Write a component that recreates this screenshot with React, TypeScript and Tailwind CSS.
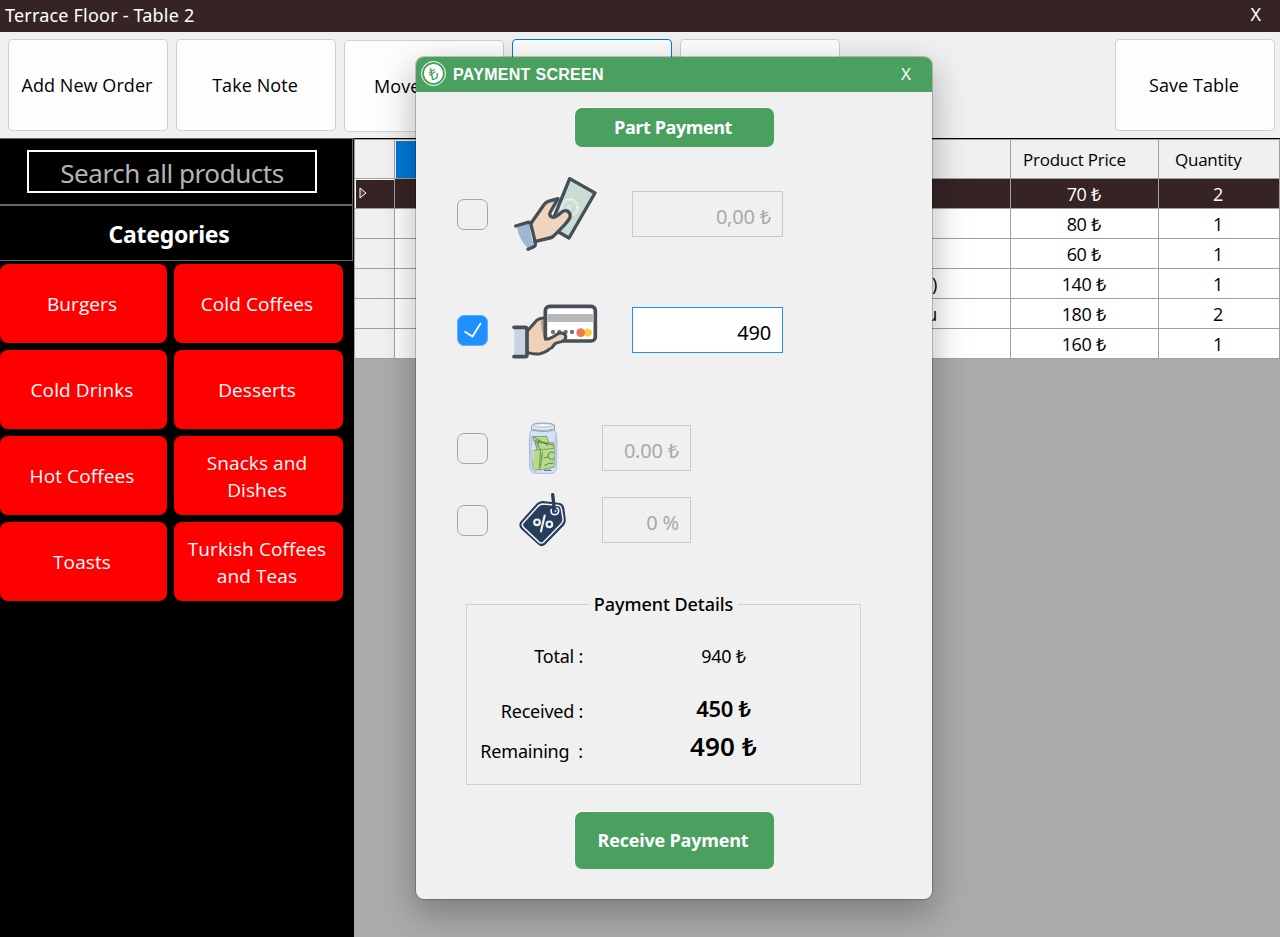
import { useState } from "react";
import type { ReactNode } from "react";

const categories = [
  "Burgers",
  "Cold Coffees",
  "Cold Drinks",
  "Desserts",
  "Hot Coffees",
  "Snacks and Dishes",
  "Toasts",
  "Turkish Coffees and Teas",
];

const orders = [
  { name: "", price: "70 ₺", quantity: 2 },
  { name: "", price: "80 ₺", quantity: 1 },
  { name: "", price: "60 ₺", quantity: 1 },
  { name: ")", price: "140 ₺", quantity: 1 },
  { name: "u", price: "180 ₺", quantity: 2 },
  { name: "", price: "160 ₺", quantity: 1 },
];

function ToolButton({ children, className = "border-[#d0d0d0]" }: { children?: ReactNode; className?: string }) {
  return (
    <button
      className={`h-[92px] w-40 shrink-0 rounded-[4px] border bg-[#fdfdfd] pt-px pr-0.5 font-['Open_Sans',sans-serif] text-[18px] tracking-[0.07px] whitespace-nowrap text-black ${className}`}
    >
      {children}
    </button>
  );
}

function CashIcon() {
  return (
    <svg viewBox="0 0 330 297" className="h-[99px] w-[110px] shrink-0" fill="none" strokeLinejoin="round" strokeLinecap="round">
      <path d="M209 41 285 84 207 219 150 186Z" fill="#c9ddd3" stroke="#464e57" strokeWidth="10" />
      <circle cx="209" cy="128" r="26" stroke="#fff" strokeWidth="2.5" />
      <circle cx="209" cy="128" r="21" stroke="#fff" strokeWidth="1.5" />
      <path d="m201 120 12 5m-13 1 12 5" stroke="#fff" strokeWidth="2" />
      <path
        d="M94 173 133 118Q137 112 145 109L174 101 149 141Q148 154 159 157 168 157 182 144 191 134 202 138 213 145 210 158 205 167 195 178L163 211Q158 217 149 219L104 230Z"
        fill="#efd5be"
      />
      <path d="M94 173 133 118Q137 112 145 109L174 101M174 101 151 141Q145 154 159 157 168 157 182 144 191 134 202 138 213 145 210 158 205 167 195 178L163 211Q158 217 149 219L104 230" stroke="#464e57" strokeWidth="10" />
      <path d="M51 185 87 175 100 242 83 249Q56 222 51 185Z" fill="#9db8d2" />
      <path d="M47 183 83 172Q91 171 93 179L106 233Q108 243 100 246L84 253" stroke="#464e57" strokeWidth="10" />
    </svg>
  );
}

function CardIcon() {
  return (
    <svg viewBox="0 0 330 243" className="h-[81px] w-[110px] shrink-0" fill="none" strokeLinejoin="round" strokeLinecap="round">
      <path d="M84 123 109 92Q118 84 136 84L142 148 183 131Q197 132 196 144 193 151 180 156L165 160Q145 186 120 191 102 194 84 188Z" fill="#edd2b9" />
      <path d="M122 92 136 88 136 147Q124 130 122 92Z" fill="#b5a18e" />
      <path d="M84 121 109 92Q118 84 134 84M84 188Q102 194 120 191 145 186 165 160" stroke="#464f57" strokeWidth="9" />
      <rect x="136" y="49" width="150" height="104" rx="13" fill="#fff" stroke="#464f57" strokeWidth="11" />
      <path d="M142 72h139v24H142z" fill="#b8b8b8" />
      <g fill="#75706f">
        <circle cx="159" cy="126" r="6.5" />
        <circle cx="178" cy="126" r="6.5" />
        <circle cx="197" cy="126" r="6.5" />
        <circle cx="216" cy="126" r="6.5" />
      </g>
      <circle cx="263" cy="128" r="12.5" fill="#fdd03b" />
      <circle cx="242" cy="128" r="13" fill="#f27557" />
      <path d="M130 157 142 147Q158 142 172 132 190 125 197 137 200 149 184 155L165 161 151 174Z" fill="#edd2b9" />
      <path d="M136 147 145 147Q158 142 174 131 190 125 197 137 200 149 184 155L166 160 155 173" stroke="#464f57" strokeWidth="9" />
      <path d="M43 112h36v88H43z" fill="#c8d5e0" />
      <path d="M42 112h33q6 0 6 6v76q0 6-6 6H42" stroke="#464f57" strokeWidth="11" />
    </svg>
  );
}

function JarIcon() {
  return (
    <svg viewBox="0 18 240 192" className="h-16 w-20 shrink-0" fill="none" strokeLinejoin="round" strokeLinecap="round">
      <path d="M82 58Q72 68 73 84L74 170Q75 187 91 190H140Q154 187 155 172L156 84Q156 67 147 58Z" fill="#d5e2f5" stroke="#8ea2bf" strokeWidth="2" />
      <path d="M80 47Q82 39 116 39 149 40 149 48L148 60Q115 69 80 60Z" fill="#e2ebf7" stroke="#7e93a6" strokeWidth="2.5" />
      <ellipse cx="115" cy="46" rx="32" ry="5.5" fill="#f2f6fa" stroke="#89a0ad" strokeWidth="2" />
      <path d="M84 57q30 9 61 0" stroke="#7e93a6" strokeWidth="2" />
      <g fill="#b4dc8b" stroke="#66834f" strokeWidth="2">
        <path d="M83 80 125 79 133 102 98 114Z" />
        <path d="M93 98 146 98 147 128 99 134Z" />
        <path d="M81 122 106 118 109 178 86 180Z" />
        <path d="M108 120 150 114 147 172 103 180Z" />
      </g>
      <path d="M85 80 128 106M90 92 148 106M100 92q-4 17 5 25M112 128 106 172M117 144 130 141M119 166q14-10 24-6" stroke="#55734a" strokeWidth="2.5" />
      <circle cx="140" cy="137" r="11" fill="#b4dc8b" stroke="#57764a" strokeWidth="2.5" />
      <path d="M79 81v86q1 13 12 17M152 78v91" stroke="#b7caeb" strokeWidth="6" />
      <path d="M84 106v46" stroke="#fff" strokeWidth="3" opacity=".6" />
      <path d="M118 181h20" stroke="#3d638c" strokeWidth="3" />
    </svg>
  );
}

function TagIcon() {
  return (
    <svg viewBox="0 234 240 192" className="h-16 w-20 shrink-0" fill="none" strokeLinejoin="round" strokeLinecap="round">
      <path d="M47 337 92 287Q100 276 113 275L160 280Q174 281 176 295L180 325Q182 337 175 345L119 403Q110 410 102 403L50 356Q42 348 47 337Z" fill="#263d5c" stroke="#263d5c" strokeWidth="4" />
      <path d="M54 339 97 291Q104 282 114 282L157 286Q168 287 169 296L174 326Q175 335 169 341L116 396Q110 402 103 397L56 353Q49 347 54 339Z" stroke="#f3f3f3" strokeWidth="4.5" />
      <path d="M151 291v13M139 299q-3 13 8 15 13 1 14-11 0-5-4-9" stroke="#f0f0f0" strokeWidth="5" />
      <path d="m143 254 5 43" stroke="#263d5c" strokeWidth="10" />
      <g stroke="#f0f0f0" strokeWidth="6.5">
        <circle cx="96" cy="337" r="8.5" />
        <circle cx="133" cy="343" r="8.5" />
        <path d="m119 317-11 47" />
      </g>
    </svg>
  );
}

function Checkbox({ initial = false }: { initial?: boolean }) {
  const [checked, setChecked] = useState(initial);
  return (
    <button
      role="checkbox"
      aria-checked={checked}
      onClick={() => setChecked(!checked)}
      className={`flex size-[31px] shrink-0 items-center justify-center rounded-[7px] border ${checked ? "border-[#62b0fb] bg-[#1e90ff]" : "border-[#a6a6a6] bg-[#f0f0f0]"}`}
    >
      {checked && (
        <svg viewBox="0 0 29 29" className="size-[29px]" fill="none" stroke="#fff" strokeWidth="1.8">
          <path d="m6.5 15.5 8 5L22.8 7" />
        </svg>
      )}
    </button>
  );
}

function Field({ children, className }: { children: ReactNode; className: string }) {
  return (
    <div className={`flex h-[46px] shrink-0 items-center justify-end border pt-[5px] pr-[11px] text-[20px] tracking-[-0.2px] ${className}`}>
      {children}
    </div>
  );
}

function PaymentDialog() {
  return (
    <section className="absolute top-[57px] left-[416px] flex h-[842px] w-[516px] flex-col items-center overflow-hidden rounded-[8px] bg-[#f0f0f0] shadow-[0_0_0_1px_rgba(0,0,0,0.2),0_12px_34px_2px_rgba(0,0,0,0.28)]">
      <header className="flex h-[35px] w-full shrink-0 items-center bg-[#4aa05f] pl-[5px] text-white">
        <span className="mb-0.5 flex size-[25px] items-center justify-center rounded-full border-[1.5px] border-white">
          <span className="flex size-[19px] -rotate-12 items-center justify-center rounded-full bg-white text-[17px] leading-none text-[#4aa05f]">₺</span>
        </span>
        <h2 className="ml-[7px] font-['Liberation_Sans',sans-serif] text-[16px] font-bold tracking-[0.3px]">PAYMENT SCREEN</h2>
        <button className="mr-[21px] ml-auto pb-px text-[17px]">X</button>
      </header>

      <button className="mt-4 h-[39px] w-[199px] shrink-0 rounded-[7px] bg-[#4aa05f] pr-0.5 font-['Open_Sans',sans-serif] text-[18px] font-bold tracking-[-0.45px] text-white shadow-[-1px_-1px_0_white]">
        Part Payment
      </button>

      <div className="mt-[18px] flex w-full items-center pl-[41px]">
        <Checkbox />
        <div className="ml-3"><CashIcon /></div>
        <Field className="mb-px ml-[22px] w-[151px] border-[#cacaca] text-[#a9a9a9]">0,00 ₺</Field>
      </div>
      <div className="mt-[26px] flex w-full items-center pl-[41px]">
        <Checkbox initial />
        <div className="ml-3"><CardIcon /></div>
        <Field className="mb-px ml-[22px] w-[151px] border-[#1e90ff] bg-white text-black">490</Field>
      </div>
      <div className="mt-[45px] flex w-full items-center pl-[41px]">
        <Checkbox />
        <div className="mx-[17px]"><JarIcon /></div>
        <Field className="w-[89px] border-[#cacaca] text-[#a9a9a9]">0.00 ₺</Field>
      </div>
      <div className="mt-2 flex w-full items-center pl-[41px]">
        <Checkbox />
        <div className="mx-[17px]"><TagIcon /></div>
        <Field className="w-[89px] border-[#cacaca] text-[#a9a9a9]">0 %</Field>
      </div>

      <fieldset className="mt-[39px] mr-[21px] h-[194px] w-[395px] shrink-0 border border-[#d0d0d0] text-black">
        <legend className="mx-auto h-[26px] px-[5px] text-[18px] leading-[26px] font-medium tracking-[-0.05px]">Payment Details</legend>
        <div className="mt-6 grid h-[30px] grid-cols-[116px_277px] items-center">
          <span className="text-right text-[18px] tracking-[-0.25px]">Total :</span>
          <span className="pl-1 text-center text-[18px] tracking-[-0.3px]">940 ₺</span>
        </div>
        <div className="mt-[22px] grid h-[30px] grid-cols-[116px_277px] items-center">
          <span className="pt-0.5 text-right text-[18px] tracking-[-0.25px]">Received :</span>
          <span className="pb-1 pl-1 text-center text-[22px] leading-[30px] font-semibold tracking-[-0.3px]">450 ₺</span>
        </div>
        <div className="mt-1.5 grid h-[34px] grid-cols-[116px_277px] items-center">
          <span className="pt-1 text-right text-[18px] tracking-[-0.2px] whitespace-pre">Remaining  :</span>
          <span className="pb-1.5 pl-1 text-center text-[26px] leading-[34px] font-semibold tracking-[0.2px]">490 ₺</span>
        </div>
      </fieldset>

      <button className="mt-[27px] h-[57px] w-[199px] shrink-0 rounded-[7px] bg-[#4aa05f] pr-0.5 font-['Open_Sans',sans-serif] text-[18px] font-bold tracking-[-0.2px] text-white shadow-[-1px_-1px_0_white]">
        Receive Payment
      </button>
    </section>
  );
}

function Sidebar() {
  return (
    <aside className="w-[354px] shrink-0 border-t border-[#646464] bg-black">
      <div className="flex h-[67px] w-[353px] items-start border-r border-b-2 border-[#646464] pt-[11px] pl-[27px]">
        <div className="flex h-[43px] w-[290px] items-center justify-center border-2 border-white pt-1 text-[26px] tracking-[-0.45px] text-[#b4b4b4]">
          Search all products
        </div>
      </div>
      <div className="flex h-[55px] w-[353px] items-center justify-center border-r border-b border-[#646464] pt-0.5 pr-3.5 text-[23px] font-bold tracking-[-0.25px] text-white">
        Categories
      </div>
      <div className="mt-[3px] grid grid-cols-[167px_169px] gap-x-[7px] gap-y-[7px]">
        {categories.map((name) => (
          <button
            key={name}
            className="h-[79px] rounded-[8px] bg-[red] pt-0.5 pr-[14px] pl-[11px] font-['Open_Sans',sans-serif] text-[19px] leading-[27px] tracking-[0.1px] text-white"
          >
            {name}
          </button>
        ))}
      </div>
    </aside>
  );
}

function OrderTable() {
  return (
    <main className="flex-1 border-t border-black bg-[#ababab] font-['Open_Sans',sans-serif] text-black">
      <div className="border-t border-l border-[#a0a0a0]">
        <div className="grid h-[39px] grid-cols-[40px_616px_148px_121px] border-b border-[#a0a0a0] bg-[#f0f0f0] text-[17px] tracking-[-0.25px]">
          <div className="border-r border-[#a0a0a0]" />
          <div className="border-r border-[#a0a0a0] pt-px pl-px"><div className="h-full w-40 bg-[#0078d7]" /></div>
          <div className="flex items-center border-r border-[#a0a0a0] pt-0.5 pl-3">Product Price</div>
          <div className="flex items-center border-r border-[#a0a0a0] pt-0.5 pl-4">Quantity</div>
        </div>
        {orders.map((order, index) => (
          <div
            key={index}
            className={`grid h-[30px] grid-cols-[40px_616px_148px_121px] border-b border-[#a0a0a0] text-center text-[18px] leading-[29px] tracking-[-0.4px] ${index === 0 ? "bg-[#362425] text-white" : "bg-white"}`}
          >
            <div className={`h-[29px] border-r border-[#a0a0a0] ${index === 0 ? "border-t border-l border-t-white border-l-white" : "bg-[#f0f0f0]"}`}>
              {index === 0 && (
                <svg viewBox="0 0 9 12" className="mt-[7px] ml-[3px] h-3 w-[9px]">
                  <path d="M1 1v10l6-5z" fill="#4a3b3c" stroke="#fff" />
                </svg>
              )}
            </div>
            <div className="h-[29px] border-r border-[#a0a0a0] pt-px pr-[73px] text-right">{order.name}</div>
            <div className="h-[29px] border-r border-[#a0a0a0] pt-px pr-0.5">{order.price}</div>
            <div className="h-[29px] border-r border-[#a0a0a0] pt-px pr-0.5">{order.quantity}</div>
          </div>
        ))}
      </div>
    </main>
  );
}

export default function App() {
  return (
    <div className="relative flex h-[937px] w-[1280px] flex-col overflow-hidden bg-[#f0f0f0] font-['Noto_Sans',sans-serif]">
      <header className="flex h-8 shrink-0 items-center justify-between bg-[#362425] pr-[19px] pl-[5px] text-white">
        <h1 className="pb-0.5 text-[18px] tracking-[0.2px]">Terrace Floor - Table 2</h1>
        <button className="pb-1 text-[18px]">X</button>
      </header>
      <nav className="flex h-[106px] shrink-0 gap-2 pt-[7px] pr-[5px] pl-2">
        <ToolButton>Add New Order</ToolButton>
        <ToolButton>Take Note</ToolButton>
        <ToolButton className="mt-px border-[#d0d0d0] pl-[29px] text-left">Move</ToolButton>
        <ToolButton className="border-[#0078d7]" />
        <ToolButton />
        <ToolButton className="ml-auto border-[#d0d0d0]">Save Table</ToolButton>
      </nav>
      <div className="flex min-h-0 flex-1">
        <Sidebar />
        <OrderTable />
      </div>
      <PaymentDialog />
    </div>
  );
}
